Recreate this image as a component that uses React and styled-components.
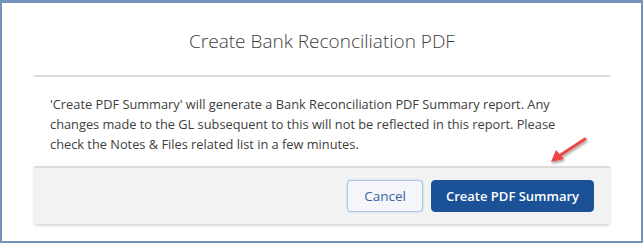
import React from "react";
import styled, { createGlobalStyle } from "styled-components";

const GlobalStyle = createGlobalStyle`
  html, body {
    margin: 0;
    padding: 0;
    background: #ffffff;
  }
  body {
    font-family: "Open Sans", "Liberation Sans", sans-serif;
  }
`;

const Frame = styled.div`
  position: relative;
  box-sizing: border-box;
  width: 643px;
  height: 243px;
  border: 2px solid #7393bd;
  border-top-width: 3px;
  background: #ffffff;
  padding: 0 31px 0 32px;
  display: flex;
  flex-direction: column;
`;

const Header = styled.header`
  height: 74px;
  display: flex;
  align-items: center;
  justify-content: center;
  border-bottom: 2px solid #dcdcdc;
  padding-top: 4px;
  box-sizing: border-box;
`;

const Title = styled.h2`
  margin: 0;
  font-size: 19px;
  font-weight: 300;
  color: #3e3e3c;
`;

const Body = styled.div`
  padding: 17px 40px 12px 16px;
  font-size: 12.8px;
  line-height: 20px;
  color: #3e3e3c;
`;

const Footer = styled.footer`
  height: 58px;
  box-sizing: border-box;
  border-top: 2px solid #dddbda;
  background: #f3f2f2;
  border-radius: 0 0 4px 4px;
  box-shadow: 0 2px 3px rgba(0, 0, 0, 0.16);
  display: flex;
  align-items: center;
  justify-content: flex-end;
  gap: 8px;
  padding: 0 16px;
`;

const Button = styled.button`
  height: 32px;
  box-sizing: border-box;
  border-radius: 4px;
  font-family: "Open Sans", "Liberation Sans", sans-serif;
  font-size: ${(p) => (p.$brand ? 13 : 13.5)}px;
  white-space: nowrap;
  padding: 0 8px;
  cursor: pointer;
  border: 1px solid ${(p) => (p.$brand ? "#1b5297" : "#a9c6e8")};
  background: ${(p) => (p.$brand ? "#1b5297" : "#f4f6f9")};
  color: ${(p) => (p.$brand ? "#ffffff" : "#3b64a3")};
  font-weight: ${(p) => (p.$brand ? 600 : 400)};
  width: ${(p) => p.$width}px;
  box-shadow: ${(p) => (p.$brand ? "none" : "0 0 2px #a9c6e8")};
`;

const Arrow = styled.svg`
  position: absolute;
  left: 540px;
  top: 129px;
  overflow: visible;
`;

export default function App() {
  return (
    <>
      <GlobalStyle />
      <Frame>
        <Header>
          <Title>Create Bank Reconciliation PDF</Title>
        </Header>
        <Body>
          'Create PDF Summary' will generate a Bank Reconciliation PDF Summary
          report. Any changes made to the GL subsequent to this will not be
          reflected in this report. Please check the Notes &amp; Files related
          list in a few minutes.
        </Body>
        <Footer>
          <Button $width={76}>Cancel</Button>
          <Button $brand $width={163}>Create PDF Summary</Button>
        </Footer>
        <Arrow width="50" height="40" viewBox="0 0 50 40">
          <defs>
            <filter id="sh" x="-30%" y="-30%" width="160%" height="160%">
              <feDropShadow dx="1" dy="2" stdDeviation="1.2" floodColor="#000" floodOpacity="0.35" />
            </filter>
          </defs>
          <g filter="url(#sh)">
            <line x1="43" y1="7" x2="17" y2="24" stroke="#ee4444" strokeWidth="3" strokeLinecap="round" />
            <polygon points="9,30 14,18 22,27" fill="#ee4444" />
          </g>
        </Arrow>
      </Frame>
    </>
  );
}
